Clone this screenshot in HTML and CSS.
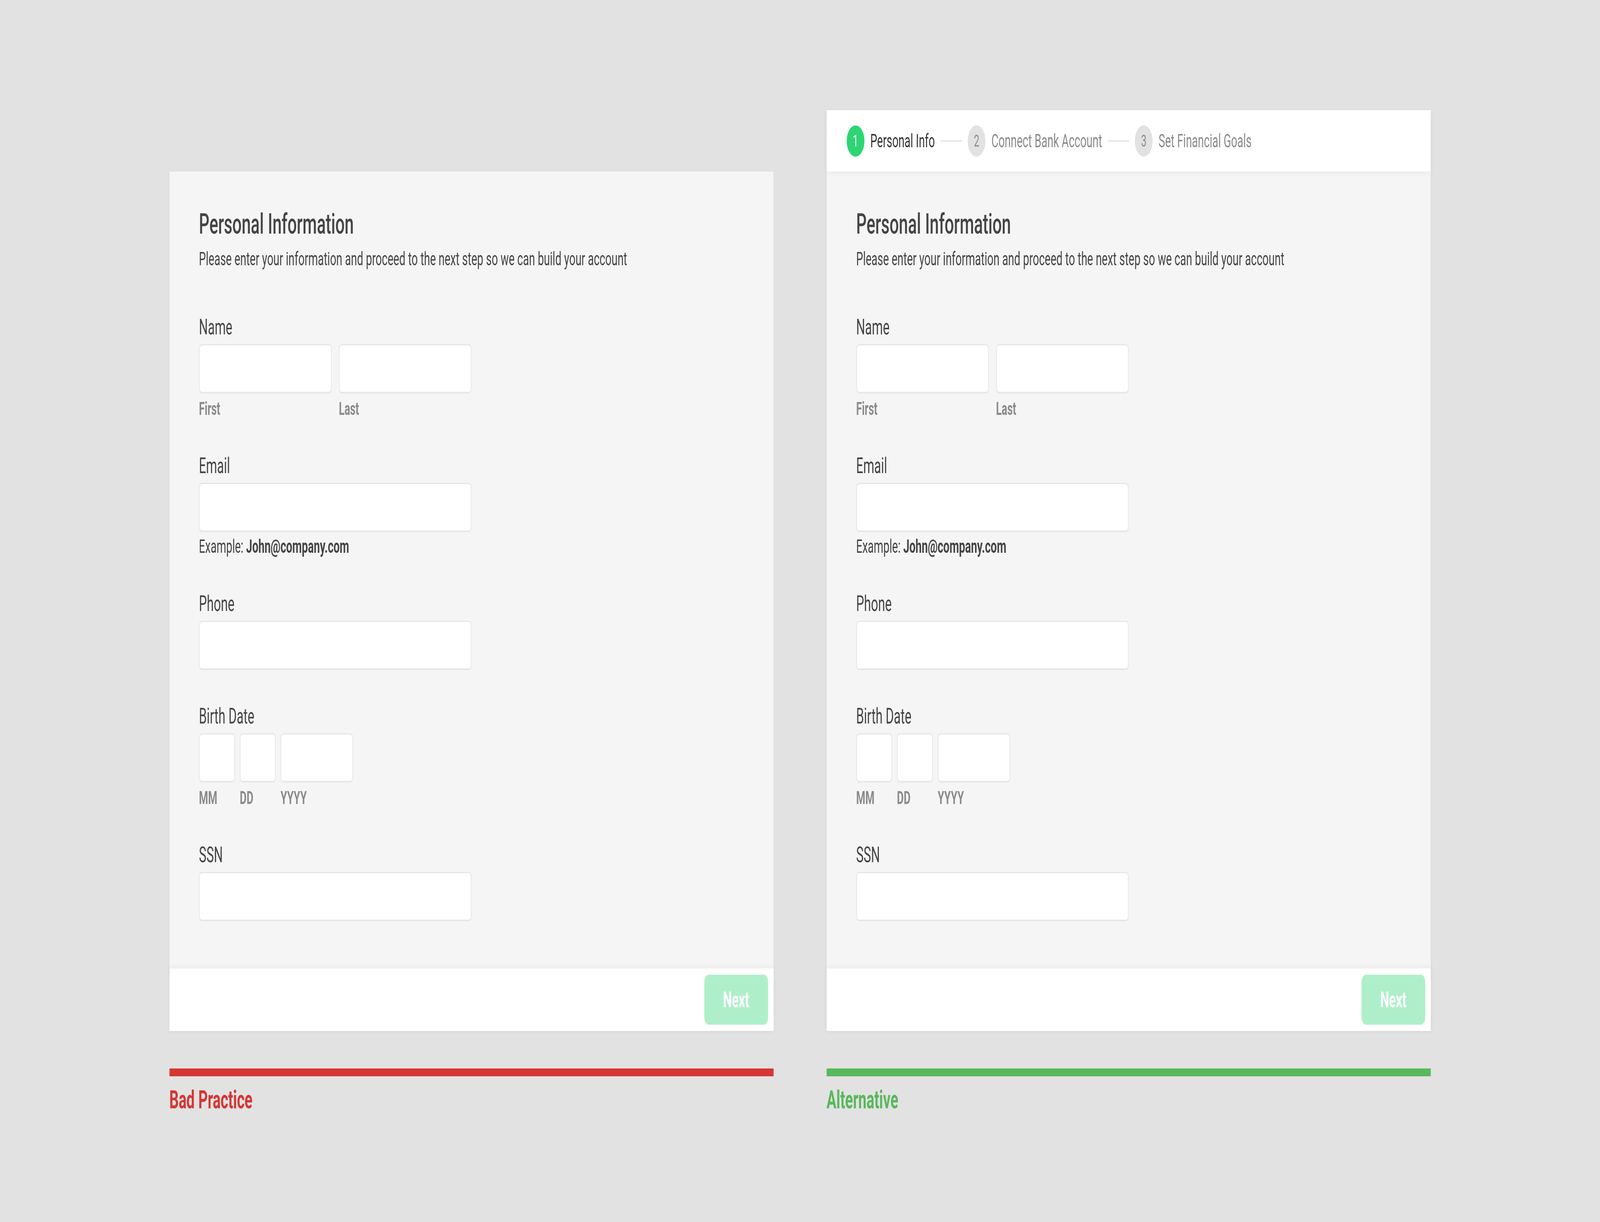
FILE: index.html
```html
<!DOCTYPE html>
<html lang="en">
<head>
    <meta charset="UTF-8">
    <meta name="viewport" content="width=device-width, initial-scale=1.0">
    <title>Personal Information Form</title>
    <link rel="stylesheet" href="styles.css">
</head>
<body>
    <div class="frame">
    <div class="stage">
        <main class="compare">
            <section class="example">
                <div class="card">
                    <div class="card-body">
                        <h1 class="form-title">Personal Information</h1>
                        <p class="form-intro">Please enter your information and proceed to the next step so we can build your account</p>

                        <div class="field">
                            <label class="field-label">Name</label>
                            <div class="field-row">
                                <div class="part">
                                    <input class="input input-half" type="text">
                                    <span class="hint">First</span>
                                </div>
                                <div class="part">
                                    <input class="input input-half" type="text">
                                    <span class="hint">Last</span>
                                </div>
                            </div>
                        </div>

                        <div class="field">
                            <label class="field-label">Email</label>
                            <input class="input input-full" type="text">
                            <span class="example-text">Example: <b>John@company.com</b></span>
                        </div>

                        <div class="field">
                            <label class="field-label">Phone</label>
                            <input class="input input-full" type="text">
                        </div>

                        <div class="field">
                            <label class="field-label">Birth Date</label>
                            <div class="field-row date-row">
                                <div class="part">
                                    <input class="input input-mm" type="text">
                                    <span class="hint">MM</span>
                                </div>
                                <div class="part">
                                    <input class="input input-dd" type="text">
                                    <span class="hint">DD</span>
                                </div>
                                <div class="part">
                                    <input class="input input-yyyy" type="text">
                                    <span class="hint">YYYY</span>
                                </div>
                            </div>
                        </div>

                        <div class="field">
                            <label class="field-label">SSN</label>
                            <input class="input input-full" type="text">
                        </div>
                    </div>
                    <div class="card-footer">
                        <button class="btn-next">Next</button>
                    </div>
                </div>
                <div class="verdict verdict-bad">
                    <div class="verdict-bar"></div>
                    <h2 class="verdict-title">Bad Practice</h2>
                </div>
            </section>

            <section class="example">
                <div class="card">
                    <nav class="stepper">
                        <div class="step step-active">
                            <span class="step-num">1</span>
                            <span class="step-name">Personal Info</span>
                        </div>
                        <span class="step-line"></span>
                        <div class="step">
                            <span class="step-num">2</span>
                            <span class="step-name">Connect Bank Account</span>
                        </div>
                        <span class="step-line"></span>
                        <div class="step">
                            <span class="step-num">3</span>
                            <span class="step-name">Set Financial Goals</span>
                        </div>
                    </nav>
                    <div class="card-body">
                        <h1 class="form-title">Personal Information</h1>
                        <p class="form-intro">Please enter your information and proceed to the next step so we can build your account</p>

                        <div class="field">
                            <label class="field-label">Name</label>
                            <div class="field-row">
                                <div class="part">
                                    <input class="input input-half" type="text">
                                    <span class="hint">First</span>
                                </div>
                                <div class="part">
                                    <input class="input input-half" type="text">
                                    <span class="hint">Last</span>
                                </div>
                            </div>
                        </div>

                        <div class="field">
                            <label class="field-label">Email</label>
                            <input class="input input-full" type="text">
                            <span class="example-text">Example: <b>John@company.com</b></span>
                        </div>

                        <div class="field">
                            <label class="field-label">Phone</label>
                            <input class="input input-full" type="text">
                        </div>

                        <div class="field">
                            <label class="field-label">Birth Date</label>
                            <div class="field-row date-row">
                                <div class="part">
                                    <input class="input input-mm" type="text">
                                    <span class="hint">MM</span>
                                </div>
                                <div class="part">
                                    <input class="input input-dd" type="text">
                                    <span class="hint">DD</span>
                                </div>
                                <div class="part">
                                    <input class="input input-yyyy" type="text">
                                    <span class="hint">YYYY</span>
                                </div>
                            </div>
                        </div>

                        <div class="field">
                            <label class="field-label">SSN</label>
                            <input class="input input-full" type="text">
                        </div>
                    </div>
                    <div class="card-footer">
                        <button class="btn-next">Next</button>
                    </div>
                </div>
                <div class="verdict verdict-good">
                    <div class="verdict-bar"></div>
                    <h2 class="verdict-title">Alternative</h2>
                </div>
            </section>
        </main>
    </div>
    </div>
</body>
</html>
```

FILE: styles.css
```css
body {
    margin: 0;
    padding: 0;
    background-color: #e2e2e2;
    font-family: Roboto, "Liberation Sans", sans-serif;
    color: #444;
    overflow: hidden;
}

.frame {
    width: 100vw;
    height: 100vh;
    overflow: hidden;
}

.stage {
    width: 7024px;
    height: 3128px;
    transform-origin: 0 0;
}

@media (max-width: 4096px) {
    .stage {
        transform: scaleX(0.58314);
    }
}

.compare {
    display: flex;
    justify-content: center;
    align-items: flex-end;
    gap: 233px;
    padding-top: 282px;
}

.example {
    width: 2652px;
    flex-shrink: 0;
}

.card {
    background-color: #f5f5f5;
    box-shadow: 0 2px 10px rgba(0, 0, 0, 0.05);
}

/* stepper */
.stepper {
    display: flex;
    align-items: center;
    gap: 25px;
    height: 157px;
    padding-left: 88px;
    background-color: #fff;
    box-shadow: 0 4px 16px rgba(0, 0, 0, 0.05);
    position: relative;
}

.step {
    display: flex;
    align-items: center;
    gap: 26px;
}

.step-num {
    display: flex;
    align-items: center;
    justify-content: center;
    width: 78px;
    height: 80px;
    border-radius: 50%;
    background-color: #e2e2e2;
    color: #8a8a8a;
    font-size: 42px;
}

.step-name {
    font-size: 48px;
    color: #8a8a8a;
}

.step-active .step-num {
    background-color: #2ed573;
    color: #fff;
}

.step-active .step-name {
    color: #333;
}

.step-line {
    width: 94px;
    height: 4px;
    background-color: #e6e6e9;
}

/* form */
.card-body {
    padding: 92px 130px 121px;
}

.form-title {
    margin: 0;
    font-size: 72px;
    line-height: 86px;
    font-weight: 500;
    color: #444;
}

.form-intro {
    margin: 18px 0 114px;
    font-size: 48px;
    line-height: 56px;
    color: #444;
}

.field {
    display: flex;
    flex-direction: column;
    align-items: flex-start;
    margin-bottom: 86px;
}

.field:last-child {
    margin-bottom: 0;
}

.field-label {
    font-size: 55px;
    line-height: 64px;
    margin-bottom: 12px;
}

.field-row {
    display: flex;
    gap: 32px;
}

.date-row {
    gap: 22px;
}

.part {
    display: flex;
    flex-direction: column;
}

.input {
    box-sizing: border-box;
    height: 126px;
    margin: 0;
    border: 3px solid #e6e6ea;
    border-bottom-width: 4px;
    border-radius: 12px;
    background-color: #fff;
    outline: none;
}

.input-full {
    width: 1196px;
}

.input-half {
    width: 582px;
}

.input-mm,
.input-dd {
    width: 157px;
}

.input-yyyy {
    width: 318px;
}

.hint {
    margin-top: 11px;
    font-size: 46px;
    line-height: 56px;
    font-weight: 700;
    color: #8a8a8a;
}

.example-text {
    margin-top: 9px;
    font-size: 48px;
    line-height: 56px;
    color: #444;
}

.example-text b {
    font-weight: 700;
}

.card-footer {
    display: flex;
    justify-content: flex-end;
    align-items: center;
    height: 160px;
    padding-right: 24px;
    background-color: #fff;
    box-shadow: 0 -6px 16px rgba(0, 0, 0, 0.04);
    position: relative;
}

.btn-next {
    width: 280px;
    height: 128px;
    border: none;
    border-radius: 20px;
    background-color: #aeefca;
    color: #fff;
    font-family: Roboto, "Liberation Sans", sans-serif;
    font-size: 55px;
    font-weight: 700;
}

/* verdict labels */
.verdict {
    margin-top: 96px;
}

.verdict-bar {
    height: 20px;
}

.verdict-title {
    margin: 21px 0 0;
    font-size: 64px;
    line-height: 80px;
    font-weight: 700;
}

.verdict-bad .verdict-bar {
    background-color: #d63633;
}

.verdict-bad .verdict-title {
    color: #d63633;
}

.verdict-good .verdict-bar {
    background-color: #58b85c;
}

.verdict-good .verdict-title {
    color: #58b85c;
}
```
